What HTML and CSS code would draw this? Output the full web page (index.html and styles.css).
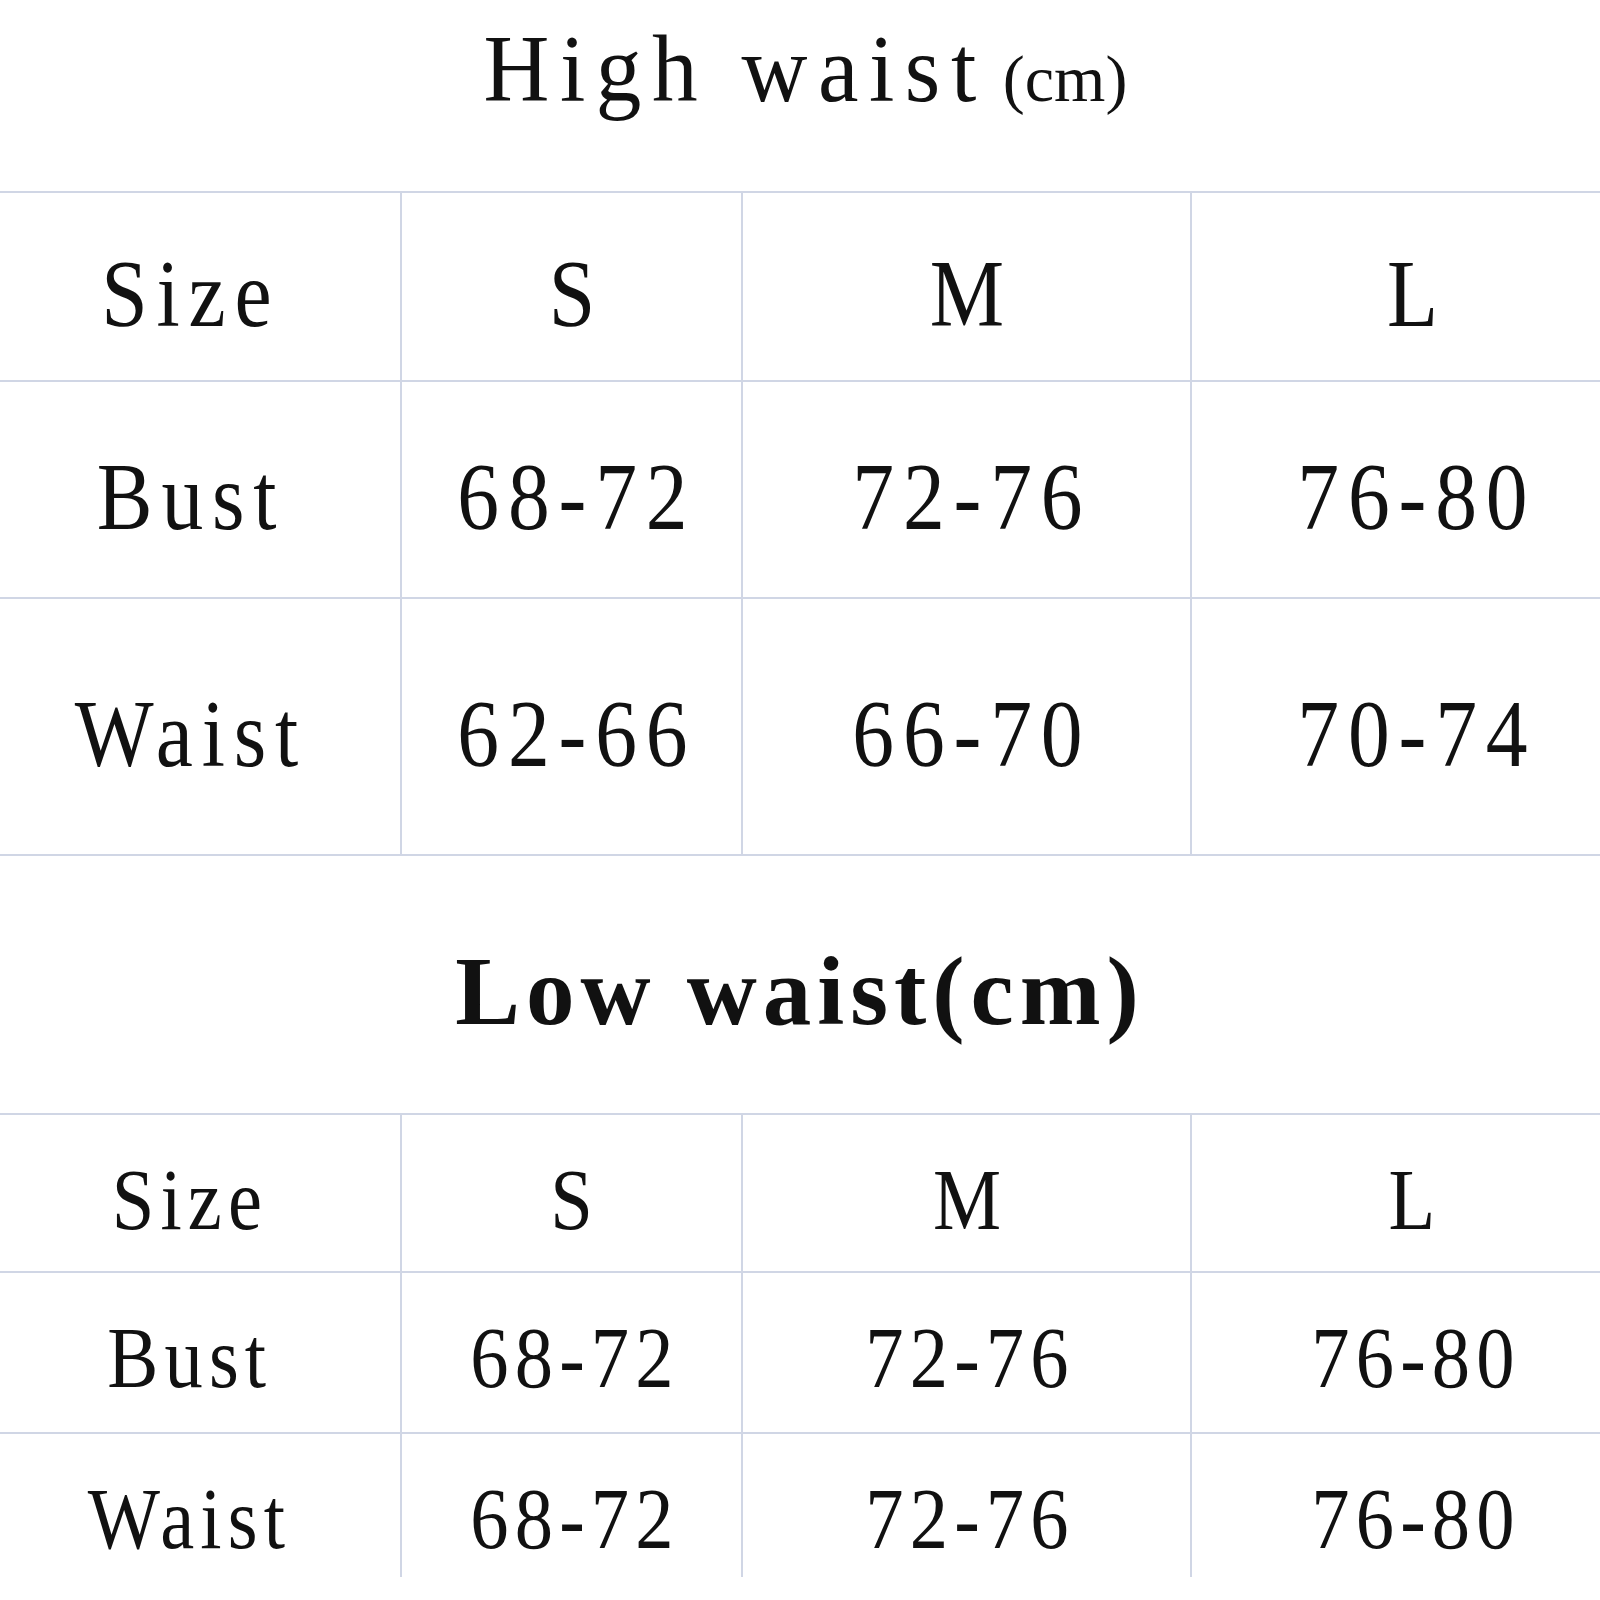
FILE: index.html
```html
<!DOCTYPE html>
<html lang="en">
<head>
<meta charset="utf-8">
<title>Size chart</title>
<link rel="stylesheet" href="styles.css">
</head>
<body>
<main class="sheet">
  <h2 class="title title-high"><span class="glyphs">High waist</span><span class="unit">(cm)</span></h2>
  <div class="grid grid-high">
    <div class="cell r1 first"><span class="txt">Size</span></div>
    <div class="cell r1"><span class="txt">S</span></div>
    <div class="cell r1"><span class="txt">M</span></div>
    <div class="cell r1"><span class="txt">L</span></div>
    <div class="cell r2 first"><span class="txt">Bust</span></div>
    <div class="cell r2"><span class="txt">68-72</span></div>
    <div class="cell r2"><span class="txt">72-76</span></div>
    <div class="cell r2"><span class="txt">76-80</span></div>
    <div class="cell r3 first"><span class="txt">Waist</span></div>
    <div class="cell r3"><span class="txt">62-66</span></div>
    <div class="cell r3"><span class="txt">66-70</span></div>
    <div class="cell r3"><span class="txt">70-74</span></div>
  </div>
  <h2 class="title title-low"><span class="glyphs">Low waist(cm)</span></h2>
  <div class="grid grid-low">
    <div class="cell r1 first"><span class="txt">Size</span></div>
    <div class="cell r1"><span class="txt">S</span></div>
    <div class="cell r1"><span class="txt">M</span></div>
    <div class="cell r1"><span class="txt">L</span></div>
    <div class="cell r2 first"><span class="txt">Bust</span></div>
    <div class="cell r2"><span class="txt">68-72</span></div>
    <div class="cell r2"><span class="txt">72-76</span></div>
    <div class="cell r2"><span class="txt">76-80</span></div>
    <div class="cell r3 first last"><span class="txt">Waist</span></div>
    <div class="cell r3 last"><span class="txt">68-72</span></div>
    <div class="cell r3 last"><span class="txt">72-76</span></div>
    <div class="cell r3 last"><span class="txt">76-80</span></div>
  </div>
</main>
</body>
</html>
```
FILE: styles.css
```css
html, body {
  margin: 0;
  padding: 0;
  background: #ffffff;
}
body {
  width: 1600px;
  height: 1600px;
  overflow: hidden;
  font-family: "Liberation Serif", "Times New Roman", serif;
  color: #111111;
}
.sheet {
  width: 1600px;
  overflow: hidden;
}
.title {
  margin: 0;
  text-align: center;
  white-space: pre;
  box-sizing: border-box;
}
.title-high {
  height: 191px;
  padding-top: 22px;
  font-size: 95px;
  line-height: 95px;
  font-weight: normal;
}
.title-high .glyphs {
  display: inline-block;
  letter-spacing: 11px;
  transform: scaleX(0.96);
}
.title-high .unit {
  display: inline-block;
  font-size: 66px;
  margin-left: 6px;
  letter-spacing: 0;
}
.title-low {
  height: 257px;
  padding-top: 87px;
  font-size: 97px;
  line-height: 97px;
  font-weight: bold;
}
.title-low .glyphs {
  letter-spacing: 6px;
}
.grid {
  display: grid;
  grid-template-columns: 428px 341px 449px 442px;
  margin-left: -28px;
  border-top: 2px solid #d0d6e5;
}
.cell {
  box-sizing: border-box;
  display: flex;
  justify-content: center;
  align-items: center;
  border-left: 2px solid #d0d6e5;
  border-bottom: 2px solid #d0d6e5;
  line-height: 1;
}
.cell.first {
  border-left: none;
}
.cell.last {
  border-bottom: none;
}
.txt {
  display: inline-block;
  line-height: 1;
  white-space: nowrap;
}
.grid-high .cell {
  font-size: 95px;
  padding-top: 16px;
}
.grid-high .txt {
  letter-spacing: 10px;
  margin-right: -10px;
  transform: scaleX(0.88);
}
.grid-high .r1 { height: 189px; }
.grid-high .r2 { height: 217px; }
.grid-high .r3 { height: 257px; }
.grid-low .cell {
  font-size: 87px;
}
.grid-low .txt {
  letter-spacing: 7px;
  margin-right: -7px;
  transform: scaleX(0.88);
}
.grid-low .r1 { height: 158px; padding-top: 13px; }
.grid-low .r2 { height: 161px; padding-top: 10px; }
.grid-low .r3 { height: 143px; padding-top: 26px; }
```
